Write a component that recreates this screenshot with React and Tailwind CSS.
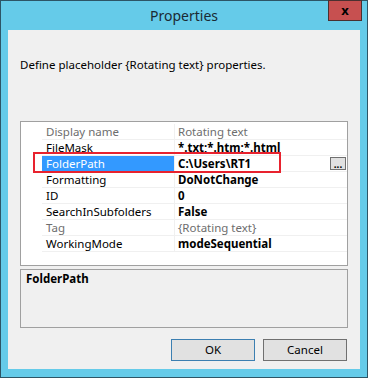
import React from 'react';

const rows = [
  { name: 'Display name', value: 'Rotating text', readonly: true },
  { name: 'FileMask', value: '*.txt;*.htm;*.html', bold: true },
  { name: 'FolderPath', value: 'C:\\Users\\RT1', bold: true, selected: true },
  { name: 'Formatting', value: 'DoNotChange', bold: true },
  { name: 'ID', value: '0', bold: true },
  { name: 'SearchInSubfolders', value: 'False', bold: true },
  { name: 'Tag', value: '{Rotating text}', readonly: true },
  { name: 'WorkingMode', value: 'modeSequential', bold: true }
];

const GridRow = ({ row }) => (
  <div className="flex h-[16px] leading-[15px]">
    <div className="w-[21px] shrink-0" />
    <div
      className={
        row.selected
          ? 'w-[133px] shrink-0 border-b border-r border-[#f0f0f0] bg-[#3399ff] pl-[4px] text-white'
          : row.readonly
          ? 'w-[133px] shrink-0 border-b border-r border-[#f0f0f0] pl-[4px] text-[#6d6d6d]'
          : 'w-[133px] shrink-0 border-b border-r border-[#f0f0f0] pl-[4px] text-black'
      }
    >
      {row.name}
    </div>
    <div
      className={
        row.readonly
          ? 'flex flex-1 items-center justify-between border-b border-[#f0f0f0] pl-[3px] pr-[1px] text-[#6d6d6d]'
          : 'flex flex-1 items-center justify-between border-b border-[#f0f0f0] pl-[3px] pr-[1px] font-bold text-black'
      }
    >
      <span>{row.value}</span>
      {row.selected && (
        <span className="flex h-[13px] w-[16px] items-end justify-center border border-[#707070] bg-[#e1e1e1] pb-[1px] text-[10px] leading-[8px] font-bold">
          ...
        </span>
      )}
    </div>
  </div>
);

const App = () => {
  return (
    <div
      className="flex h-[378px] w-[368px] flex-col border border-[#2d5566] bg-[#65cbe9] text-[11.5px] text-black"
      style={{ fontFamily: '"Noto Sans", "Liberation Sans", Arial, sans-serif' }}
    >
      <header className="relative flex h-[29px] shrink-0 items-center justify-center">
        <span className="text-[14px] text-[#1a2a33]">Properties</span>
        <button className="absolute right-[5px] top-[-1px] flex h-[21px] w-[34px] items-center justify-center border border-[#4a3030] bg-[#c75050] text-[13px] font-bold leading-none text-black">
          x
        </button>
      </header>

      <main className="mx-[7px] flex h-[339px] flex-col bg-[#f0f0f0] px-[12px]">
        <p className="mt-[26px] h-[17px] leading-[17px]">
          Define placeholder {'{Rotating text}'} properties.
        </p>

        <section className="relative mt-[48px] h-[145px] w-[328px] border border-[#a0a0a0] bg-white pt-[2px]">
          {rows.map(row => (
            <GridRow key={row.name} row={row} />
          ))}
          <div className="pointer-events-none absolute left-[12px] top-[30px] h-[21px] w-[248px] border-2 border-[#e8222e]" />
        </section>

        <section className="mt-[3px] h-[59px] w-[328px] border border-[#a0a0a0] px-[5px] pt-[1px]">
          <p className="font-bold leading-[16px]">FolderPath</p>
        </section>

        <footer className="mt-[11px] flex justify-end gap-[8px] pr-[1px]">
          <button className="h-[22px] w-[84px] border border-[#3c7fb1] bg-[#e1e1e1]">OK</button>
          <button className="h-[22px] w-[84px] border border-[#707070] bg-[#e1e1e1]">Cancel</button>
        </footer>
      </main>
    </div>
  );
};

export default App;
